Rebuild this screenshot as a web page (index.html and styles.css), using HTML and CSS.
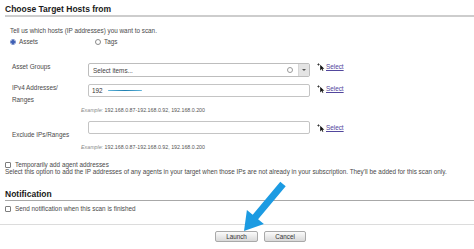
FILE: index.html
```html
<!DOCTYPE html>
<html lang="en">
<head>
    <meta charset="UTF-8">
    <title>Choose Target Hosts</title>
    <link rel="stylesheet" href="styles.css">
</head>
<body>
    <div class="page">
        <h2 class="section-title">Choose Target Hosts from</h2>
        <p class="intro">Tell us which hosts (IP addresses) you want to scan.</p>
        <div class="choice-row">
            <label class="choice"><span class="radio checked"></span>Assets</label>
            <label class="choice"><span class="radio"></span>Tags</label>
        </div>

        <div class="fields">
            <div class="field-row row-groups">
                <div class="field-label">Asset Groups</div>
                <div class="field-body">
                    <div class="select-box">
                        <span class="placeholder">Select items...</span>
                        <span class="spinner"></span>
                        <span class="caret-box"><span class="caret"></span></span>
                    </div>
                </div>
                <a class="pick-link" href="#">
                    <svg class="pick-icon" viewBox="0 0 8 8"><path d="M1.5 0.3v2.4M0.3 1.5h2.4" stroke="#222" stroke-width="0.7"/><path d="M3.2 1.8v5.6l1.4-1.3 1 1.9.8-.4-1-1.8h1.9z" fill="#111"/></svg>
                    <span>Select</span>
                </a>
            </div>

            <div class="field-row row-ipv4">
                <div class="field-label">IPv4 Addresses/<br>Ranges</div>
                <div class="field-body">
                    <div class="text-input">192<span class="scribble"></span></div>
                    <div class="example"><em>Example:</em> 192.168.0.87-192.168.0.92, 192.168.0.200</div>
                </div>
                <a class="pick-link" href="#">
                    <svg class="pick-icon" viewBox="0 0 8 8"><path d="M1.5 0.3v2.4M0.3 1.5h2.4" stroke="#222" stroke-width="0.7"/><path d="M3.2 1.8v5.6l1.4-1.3 1 1.9.8-.4-1-1.8h1.9z" fill="#111"/></svg>
                    <span>Select</span>
                </a>
            </div>

            <div class="field-row row-exclude">
                <div class="field-label">Exclude IPs/Ranges</div>
                <div class="field-body">
                    <div class="text-input"></div>
                    <div class="example"><em>Example:</em> 192.168.0.87-192.168.0.92, 192.168.0.200</div>
                </div>
                <a class="pick-link" href="#">
                    <svg class="pick-icon" viewBox="0 0 8 8"><path d="M1.5 0.3v2.4M0.3 1.5h2.4" stroke="#222" stroke-width="0.7"/><path d="M3.2 1.8v5.6l1.4-1.3 1 1.9.8-.4-1-1.8h1.9z" fill="#111"/></svg>
                    <span>Select</span>
                </a>
            </div>
        </div>

        <label class="check-row agent"><span class="checkbox"></span>Temporarily add agent addresses</label>
        <p class="hint">Select this option to add the IP addresses of any agents in your target when those IPs are not already in your subscription. They'll be added for this scan only.</p>

        <h2 class="section-title notify">Notification</h2>
        <label class="check-row notify-check"><span class="checkbox"></span>Send notification when this scan is finished</label>

        <div class="actions">
            <button class="btn">Launch</button>
            <button class="btn">Cancel</button>
        </div>

        <svg class="pointer-arrow" viewBox="0 0 474 249">
            <polygon points="280.3,181.8 285.7,186.2 258.1,219.2 263.9,223.9 244,231 246.9,210.1 252.7,214.8" fill="#1c9be2"/>
        </svg>
    </div>
</body>
</html>
```

FILE: styles.css
```css
* {
    box-sizing: border-box;
}

body {
    margin: 0;
    background: #fff;
    font-family: "Liberation Sans", Arial, sans-serif;
    font-size: 6.35px;
    color: #4a4a4a;
}

.page {
    position: relative;
    width: 474px;
    height: 249px;
    overflow: hidden;
}

.section-title {
    margin: 0 0 0 5px;
    padding-top: 4px;
    font-size: 8.5px;
    line-height: 11px;
    font-weight: bold;
    color: #1a1a1a;
    border-bottom: 2px solid #cdcdcd;
}

.intro {
    margin: 10px 0 0 10px;
    line-height: 8px;
}

.choice-row {
    display: flex;
    align-items: center;
    height: 9px;
    margin: 2px 0 0 10px;
}

.choice {
    display: flex;
    align-items: center;
}

.choice:first-child {
    width: 85px;
}

.radio {
    width: 6px;
    height: 6px;
    margin-right: 3px;
    border: 1px solid #8a8a8a;
    border-radius: 50%;
    background: #fff;
}

.radio.checked {
    border-color: #6f86c4;
    background: radial-gradient(circle, #3f5fb5 0 1.7px, #fff 2.1px);
}

.fields {
    margin-top: 17px;
    padding-left: 12px;
}

.field-row {
    display: flex;
    align-items: flex-start;
}

.field-label {
    flex: none;
    width: 76px;
    line-height: 8px;
}

.field-body {
    flex: none;
    width: 222px;
}

.pick-link {
    display: flex;
    align-items: center;
    margin-left: 7px;
    line-height: 8px;
    color: #52479d;
    text-decoration: none;
}

.pick-link span {
    text-decoration: underline;
}

.pick-icon {
    width: 8px;
    height: 8px;
    margin-right: 1px;
}

.select-box {
    display: flex;
    align-items: center;
    height: 14px;
    padding-left: 4px;
    border: 1px solid #bdbdbd;
    border-radius: 2px;
    color: #444;
}

.placeholder {
    flex: 1;
}

.spinner {
    width: 6px;
    height: 6px;
    margin-right: 5px;
    border: 1px solid #9a9a9a;
    border-radius: 50%;
}

.caret-box {
    display: flex;
    align-items: center;
    justify-content: center;
    align-self: stretch;
    width: 11px;
    background: #e4e4e4;
    border-left: 1px solid #d6d6d6;
}

.caret {
    border-left: 2px solid transparent;
    border-right: 2px solid transparent;
    border-top: 2px solid #555;
}

.text-input {
    display: flex;
    align-items: center;
    height: 13px;
    padding-left: 3px;
    border: 1px solid #c4c4c4;
    border-radius: 2px;
    color: #333;
}

.scribble {
    display: inline-block;
    width: 34px;
    height: 1.6px;
    margin-left: 5px;
    border-radius: 1px;
    background: linear-gradient(90deg, #63b7dd, #1f7fb0 50%, #63b7dd);
}

.example {
    margin: 9px 0 0 -7px;
    font-size: 5.3px;
    line-height: 8px;
    color: #555;
    white-space: nowrap;
}

.example em {
    color: #8a8a8a;
}

.row-groups .pick-link {
    height: 8px;
}

.row-ipv4 {
    margin-top: 7px;
}

.row-ipv4 .field-label {
    margin-top: -2px;
    line-height: 12px;
}

.row-ipv4 .pick-link {
    margin-top: 1px;
}

.row-exclude {
    margin-top: 7px;
}

.row-exclude .field-label {
    margin-top: 10px;
}

.row-exclude .pick-link {
    margin-top: 3px;
}

.check-row {
    display: flex;
    align-items: center;
    line-height: 7px;
}

.checkbox {
    width: 6px;
    height: 6px;
    margin-right: 4px;
    border: 1px solid #7d7d7d;
    border-radius: 1px;
    background: #fff;
}

.agent {
    margin: 10px 0 0 5px;
}

.hint {
    margin: 0 0 0 5px;
    line-height: 7px;
    white-space: nowrap;
}

.notify {
    margin-top: 13.5px;
    padding-top: 0;
    border-bottom: 1px solid #a8a8a8;
}

.notify-check {
    margin: 4.5px 0 0 5px;
    line-height: 8px;
}

.actions {
    display: flex;
    gap: 6px;
    margin-top: 11px;
    padding: 6px 0 0 215px;
    border-top: 1px solid #dcdcdc;
}

.btn {
    width: 43px;
    height: 11px;
    padding: 0;
    font-family: inherit;
    font-size: 6.3px;
    color: #333;
    border: 1px solid #a9a9a9;
    border-radius: 2px;
    background: linear-gradient(#fbfbfb, #d9d9d9);
}

.btn + .btn {
    width: 42px;
}

.pointer-arrow {
    position: absolute;
    top: 0;
    left: 0;
    width: 474px;
    height: 249px;
    pointer-events: none;
}
```
